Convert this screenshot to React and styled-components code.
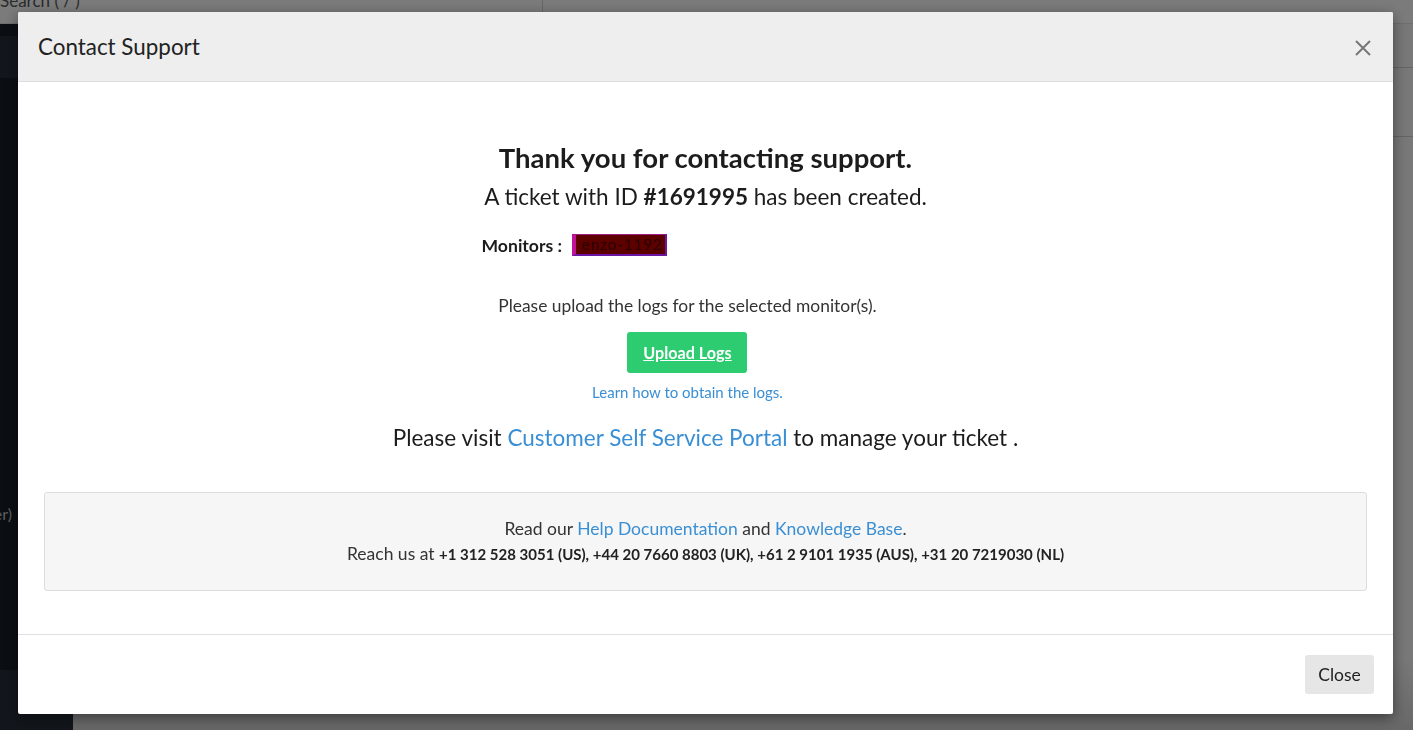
import React from 'react'
import styled, { createGlobalStyle } from 'styled-components'

const GlobalStyle = createGlobalStyle`
  html, body {
    margin: 0;
    padding: 0;
    height: 100%;
    overflow: hidden;
  }
  body {
    font-family: 'Lato', 'Open Sans', 'Noto Sans', sans-serif;
    color: #333;
  }
  * { box-sizing: border-box; }
`

/* page behind the dialog */
const Page = styled.div`
  width: 1413px;
  height: 730px;
  display: flex;
  flex-direction: column;
  background: #f2f2f2;
`

const TopBar = styled.div`
  height: 24px;
  flex: none;
  display: flex;
  background: #f7f7f7;
  border-bottom: 1px solid #dcdcdc;
  overflow: hidden;
`

const SearchBox = styled.div`
  width: 543px;
  border-right: 1px solid #cfcfcf;
  font-size: 17px;
  color: #555;
  line-height: 14px;
  margin-top: -6px;
  white-space: nowrap;
  overflow: hidden;
`

const Layout = styled.div`
  flex: 1;
  display: flex;
  min-height: 0;
`

const Sidebar = styled.div`
  width: 73px;
  flex: none;
  display: flex;
  flex-direction: column;
  background: #161d27;
`

const SideItem = styled.div`
  height: ${p => p.$h}px;
  flex: none;
  background: ${p => (p.$light ? '#252d38' : 'transparent')};
  color: #bbb;
  font-size: 16px;
  display: flex;
  align-items: center;
  justify-content: flex-end;
  padding-right: 61px;
  white-space: nowrap;
`

const Main = styled.div`
  flex: 1;
  display: flex;
  flex-direction: column;
  background: linear-gradient(180deg, #f0f0f0 0%, #f0f0f0 90%, #d0d0d0 100%);
`

const MainRow = styled.div`
  height: ${p => p.$h}px;
  flex: none;
  border-bottom: 1px solid #c8c8c8;
`

const Overlay = styled.div`
  position: fixed;
  inset: 0;
  background: rgba(0, 0, 0, 0.5);
`

/* the dialog */
const Modal = styled.div`
  position: fixed;
  left: 18px;
  top: 12px;
  width: 1375px;
  height: 702px;
  background: #fff;
  border-radius: 2px;
  box-shadow: 0 4px 14px rgba(0, 0, 0, 0.45);
  display: flex;
  flex-direction: column;
  overflow: hidden;
`

const Header = styled.div`
  height: 70px;
  flex: none;
  background: #eeeeee;
  border-bottom: 1px solid #dddddd;
  display: flex;
  align-items: center;
  justify-content: space-between;
  padding: 0 20px 0 20px;
`

const Title = styled.h4`
  margin: 0;
  font-size: 22.4px;
  font-weight: 400;
  color: #222;
`

const CloseX = styled.button`
  border: 0;
  background: none;
  padding: 0;
  width: 20px;
  height: 20px;
  margin-top: 2px;
  display: flex;
  align-items: center;
  justify-content: center;
  cursor: pointer;
`

const Body = styled.div`
  flex: 1;
  padding: 60px 26px 0 26px;
  display: flex;
  flex-direction: column;
  align-items: center;
  border-bottom: 1px solid #e0e0e0;
`

const Heading = styled.h2`
  margin: 0;
  font-size: 27.5px;
  line-height: 32px;
  font-weight: 700;
  color: #1c1c1c;
`

const SubLine = styled.p`
  margin: 9px 0 0 0;
  font-size: 22.5px;
  line-height: 28px;
  color: #1c1c1c;

  b {
    font-weight: 700;
  }
`

const MonitorRow = styled.div`
  width: 448px;
  margin-top: 22px;
  display: flex;
  align-items: center;
  gap: 10px;
  height: 24px;
  font-size: 17.6px;
  font-weight: 700;
  color: #1c1c1c;
`

const Redacted = styled.span`
  display: inline-block;
  width: 95px;
  height: 22px;
  background: #5c0000;
  border-left: 4px solid #c0139a;
  border-top: 1px solid #a01a8a;
  border-bottom: 2px solid #6a16a0;
  border-right: 2px solid #6a16a0;
  color: #2a0000;
  font-size: 15px;
  font-weight: 400;
  line-height: 19px;
  padding-left: 6px;
  letter-spacing: 1px;
`

const UploadBlock = styled.div`
  margin-top: 38px;
  margin-right: 36px;
  display: flex;
  flex-direction: column;
  align-items: center;
`

const UploadText = styled.p`
  margin: 0;
  font-size: 17.4px;
  line-height: 22px;
  color: #333;
`

const UploadButton = styled.button`
  margin-top: 15px;
  width: 120px;
  height: 41px;
  border: 0;
  border-radius: 3px;
  background: #2ecc71;
  color: #fff;
  font-family: inherit;
  font-size: 16.2px;
  font-weight: 700;
  text-decoration: underline;
  cursor: pointer;
`

const SmallLink = styled.a`
  margin-top: 9px;
  font-size: 15px;
  line-height: 20px;
  color: #3a8fd4;
  text-decoration: none;
`

const VisitLine = styled.p`
  margin: 22px 0 0 0;
  font-size: 22.5px;
  line-height: 28px;
  color: #1c1c1c;
`

const Link = styled.a`
  color: #3a8fd4;
  text-decoration: none;
`

const InfoBox = styled.div`
  align-self: stretch;
  margin-top: 40px;
  height: 99px;
  background: #f6f6f6;
  border: 1px solid #dddddd;
  border-radius: 3px;
  display: flex;
  flex-direction: column;
  align-items: center;
  justify-content: center;
  font-size: 17.5px;
  line-height: 25px;
  color: #333;
`

const Phones = styled.span`
  font-weight: 700;
  font-size: 15px;
  color: #222;
`

const Footer = styled.div`
  height: 79px;
  flex: none;
  display: flex;
  align-items: center;
  justify-content: flex-end;
  padding: 0 19px 1px 0;
`

const CloseButton = styled.button`
  width: 69px;
  height: 39px;
  border: 0;
  border-radius: 3px;
  background: #e6e6e6;
  color: #222;
  font-family: inherit;
  font-size: 17.5px;
  cursor: pointer;
`

const XIcon = () => (
  <svg width="18" height="18" viewBox="0 0 18 18">
    <path d="M2 2 L16 16 M16 2 L2 16" stroke="#777" strokeWidth="2" fill="none" />
  </svg>
)

const App = () => {
  return (
    <>
      <GlobalStyle />
      <Page>
        <TopBar>
          <SearchBox>Search ( / )</SearchBox>
        </TopBar>
        <Layout>
          <Sidebar>
            <SideItem $h={12} />
            <SideItem $h={42} $light />
            <SideItem $h={405} />
            <SideItem $h={60}>{'(Other)'}</SideItem>
            <SideItem $h={127} />
            <SideItem $h={60} $light />
          </Sidebar>
          <Main>
            <MainRow $h={44} />
            <MainRow $h={69} />
          </Main>
        </Layout>
      </Page>
      <Overlay />
      <Modal>
        <Header>
          <Title>Contact Support</Title>
          <CloseX aria-label="close">
            <XIcon />
          </CloseX>
        </Header>
        <Body>
          <Heading>Thank you for contacting support.</Heading>
          <SubLine>
            A ticket with ID <b>#1691995</b> has been created.
          </SubLine>
          <MonitorRow>
            <span>Monitors :</span>
            <Redacted>enzo-1192</Redacted>
          </MonitorRow>
          <UploadBlock>
            <UploadText>Please upload the logs for the selected monitor(s).</UploadText>
            <UploadButton>Upload Logs</UploadButton>
            <SmallLink href="#">Learn how to obtain the logs.</SmallLink>
          </UploadBlock>
          <VisitLine>
            Please visit <Link href="#">Customer Self Service Portal</Link> to manage your ticket .
          </VisitLine>
          <InfoBox>
            <div>
              Read our <Link href="#">Help Documentation</Link> and <Link href="#">Knowledge Base</Link>.
            </div>
            <div>
              Reach us at{' '}
              <Phones>
                +1 312 528 3051 (US), +44 20 7660 8803 (UK), +61 2 9101 1935 (AUS), +31 20 7219030 (NL)
              </Phones>
            </div>
          </InfoBox>
        </Body>
        <Footer>
          <CloseButton>Close</CloseButton>
        </Footer>
      </Modal>
    </>
  )
}

export default App
